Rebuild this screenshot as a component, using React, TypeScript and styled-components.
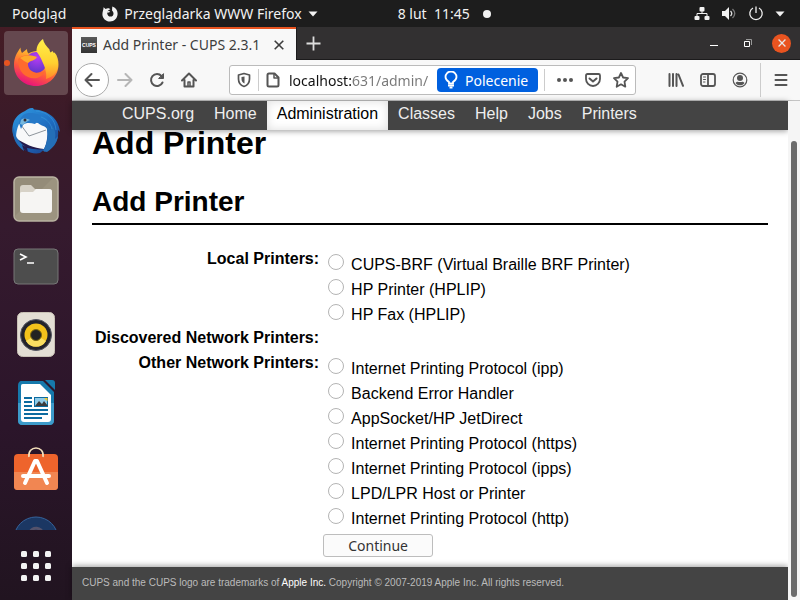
import React from "react";
import styled, { createGlobalStyle } from "styled-components";

const uiFont = `"Noto Sans", "Open Sans", sans-serif`;
const pageFont = `"Liberation Sans", Arial, sans-serif`;

const GlobalStyle = createGlobalStyle`
  *, *::before, *::after { box-sizing: border-box; }
  body { margin: 0; background: #fff; }
  button, input { font: inherit; color: inherit; }
  button { background: none; border: 0; padding: 0; cursor: pointer; }
  svg { display: block; flex: none; }
`;

/* ---------- desktop ---------- */

const Desktop = styled.div`
  display: flex;
  flex-direction: column;
  height: 100vh;
  overflow: hidden;
  font-family: ${uiFont};
`;

const TopBar = styled.header`
  display: grid;
  grid-template-columns: 1fr auto 1fr;
  align-items: center;
  flex: none;
  height: 27px;
  padding: 0 15px 0 12px;
  background: #1d1d1d;
  color: #f2f2f2;
  font-size: 14px;
  white-space: nowrap;
`;

const TopGroup = styled.div<{ $end?: boolean }>`
  display: flex;
  align-items: center;
  gap: ${(p) => (p.$end ? "11px" : "36px")};
  justify-content: ${(p) => (p.$end ? "flex-end" : "flex-start")};
`;

const TopButton = styled.button<{ $gap?: number }>`
  display: flex;
  align-items: center;
  gap: ${(p) => p.$gap ?? 6}px;
`;

const Clock = styled(TopButton)`
  margin-left: 80px;
`;

const Workspace = styled.div`
  display: flex;
  flex: 1;
  min-height: 0;
`;

const Dock = styled.nav`
  display: flex;
  flex-direction: column;
  flex: none;
  width: 72px;
  background: linear-gradient(#451c25 0, #391a29 110px, #351a2e 200px, #2b152a 400px, #211420 100%);
`;

const DockList = styled.div`
  display: flex;
  flex-direction: column;
  align-items: center;
  gap: 4px;
  flex: 1;
  min-height: 0;
  padding-top: 4px;
  overflow: hidden;
`;

const DockItem = styled.button<{ $active?: boolean }>`
  display: grid;
  place-items: center;
  flex: none;
  width: 64px;
  height: 64px;
  border-radius: 4px;
  background: ${(p) => (p.$active ? "#65484f" : "transparent")};
  position: relative;
  ${(p) =>
    p.$active &&
    `&::before {
      content: "";
      position: absolute;
      left: 0;
      top: 29px;
      width: 6px;
      height: 6px;
      border-radius: 50%;
      background: #e95420;
    }`}
`;

const AppsButton = styled.button`
  display: grid;
  place-items: center;
  height: 70px;
  padding-top: 2px;
  flex: none;
`;

/* ---------- browser ---------- */

const Browser = styled.section`
  display: flex;
  flex-direction: column;
  flex: 1;
  min-width: 0;
`;

const TabStrip = styled.div`
  display: flex;
  align-items: stretch;
  flex: none;
  height: 33px;
  background: #323031;
  border-bottom: 1px solid #1c1b1c;
  color: #e8e8e8;
`;

const Tab = styled.div`
  display: flex;
  align-items: center;
  width: 224px;
  height: 33px;
  padding: 0 12px 0 9px;
  gap: 6px;
  border-top: 2px solid #e95420;
  background: #f8f8f8;
  color: #3d3d3d;
  font-size: 14px;
  white-space: nowrap;
`;

const TabTitle = styled.span`
  flex: 1;
`;

const Favicon = styled.span`
  display: grid;
  place-items: center;
  width: 16px;
  height: 16px;
  background: linear-gradient(#5a5a5a, #333);
  color: #fff;
  font: bold 5px/16px ${pageFont};
`;

const NewTab = styled.button`
  padding: 0 9px;
  border-left: 1px solid #1c1b1c;
`;

const WindowControls = styled.div`
  display: flex;
  align-items: center;
  gap: 14px;
  margin-left: auto;
  padding-right: 9px;
`;

const WindowButton = styled.button<{ $close?: boolean }>`
  display: grid;
  place-items: center;
  width: ${(p) => (p.$close ? 19 : 20)}px;
  height: 19px;
  border-radius: 50%;
  background: ${(p) => (p.$close ? "#e95420" : "transparent")};
`;

const Toolbar = styled.div`
  display: flex;
  align-items: center;
  flex: none;
  height: 41px;
  padding: 0 5px 0 3px;
  background: #f8f8f8;
  border-bottom: 1px solid #c4c4c4;
  color: #555;
`;

const ToolButton = styled.button<{ $back?: boolean; $dim?: boolean }>`
  display: grid;
  place-items: center;
  flex: none;
  width: ${(p) => (p.$back ? 34 : 32)}px;
  height: ${(p) => (p.$back ? 34 : 32)}px;
  border-radius: 50%;
  border: ${(p) => (p.$back ? "1px solid #aaa" : "0")};
  background: ${(p) => (p.$back ? "#fff" : "transparent")};
  opacity: ${(p) => (p.$dim ? 0.4 : 1)};
`;

const UrlBar = styled.div`
  display: flex;
  align-items: center;
  flex: 1;
  min-width: 0;
  height: 30px;
  margin: 0 24px;
  padding-left: 6px;
  border: 1px solid #bbb;
  border-radius: 3px;
  background: #fff;
`;

const BarButton = styled.button<{ $width?: number }>`
  display: grid;
  align-items: center;
  justify-content: ${(p) => (p.$width ? "start" : "center")};
  flex: none;
  width: ${(p) => p.$width ?? 28}px;
  height: 28px;
`;

const Divider = styled.span<{ $tall?: boolean }>`
  flex: none;
  width: 1px;
  height: ${(p) => (p.$tall ? 34 : 22)}px;
  margin: 0 6px 0 ${(p) => (p.$tall ? 4 : 6)}px;
  background: #ccc;
`;

const UrlInput = styled.input`
  flex: 1;
  min-width: 0;
  height: 26px;
  padding: 0;
  border: 0;
  outline: 0;
  background: linear-gradient(90deg, #111 64px, #777 64px);
  background-clip: text;
  -webkit-background-clip: text;
  -webkit-text-fill-color: transparent;
  font-size: 14px;
`;

const Hint = styled.button`
  display: flex;
  align-items: center;
  gap: 7px;
  flex: none;
  width: 101px;
  height: 24px;
  padding-left: 7px;
  border-radius: 4px;
  background: #0060df;
  color: #fff;
  font-size: 14px;
`;

const Viewport = styled.div`
  display: flex;
  flex: 1;
  min-height: 0;
`;

const ScrollTrack = styled.div`
  flex: none;
  width: 12px;
  padding: 40px 3px 3px;
  background: #f5f5f5;
`;

const ScrollThumb = styled.div`
  height: 100%;
  border-radius: 3px;
  background: #6b6b6b;
`;

/* ---------- CUPS page ---------- */

const Page = styled.div`
  display: flex;
  flex-direction: column;
  flex: 1;
  min-width: 0;
  background: #fff;
  color: #000;
  font-family: ${pageFont};
  font-size: 16px;
`;

const SiteNav = styled.nav`
  display: flex;
  flex: none;
  height: 29px;
  padding-left: 40px;
  background: #444;
  box-shadow: 0 1px 6px rgba(0, 0, 0, 0.4);
`;

const NavLink = styled.a<{ $current?: boolean }>`
  padding: 0 10px;
  line-height: 25px;
  text-decoration: none;
  color: ${(p) => (p.$current ? "#000" : "#eee")};
  background: ${(p) => (p.$current ? "#fff" : "transparent")};
  box-shadow: ${(p) => (p.$current ? "inset 0 0 10px #ddd" : "none")};
`;

const Main = styled.main`
  flex: 1;
  min-height: 0;
  padding: 0 20px;
`;

const Title = styled.h1`
  margin: 0;
  font-size: 32px;
  line-height: 26px;
`;

const Subtitle = styled.h2`
  margin: 27px 0 0;
  padding-bottom: 2px;
  border-bottom: 2px solid #000;
  font-size: 28px;
  line-height: 38px;
`;

const PrinterForm = styled.form`
  display: grid;
  grid-template-columns: max-content 1fr;
  column-gap: 9px;
  padding: 21px 3px 0;
  line-height: 25px;
`;

const GroupLabel = styled.div`
  text-align: right;
  font-weight: bold;
`;

const Options = styled.div`
  display: flex;
  flex-direction: column;
  min-height: 25px;
`;

const Option = styled.label`
  display: flex;
  align-items: flex-start;
  gap: 7px;
  height: 25px;

  &:first-child { margin-top: 6px; }
  &:last-child { margin-bottom: -2px; }
`;

const Radio = styled.input`
  appearance: none;
  flex: none;
  width: 16px;
  height: 16px;
  margin: 2px 0 0;
  border: 1px solid #b4b4b4;
  border-radius: 50%;
  background: #fff;

  &:checked { border: 5px solid #e95420; }
`;

const Submit = styled.button`
  grid-column: 2;
  width: 110px;
  height: 23px;
  margin: 5px 0 0 -5px;
  border: 1px solid #bdbdbd;
  border-radius: 3px;
  background: #fbfbfb;
  color: #333;
  font: 14px/20px ${uiFont};
`;

const Footer = styled.footer`
  flex: none;
  height: 33px;
  padding: 0 10px;
  background: #444;
  box-shadow: 0 -1px 6px rgba(0, 0, 0, 0.4);
  color: #bbb;
  font-size: 10px;
  line-height: 31px;
  white-space: nowrap;

  a { color: #fff; text-decoration: none; }
`;

/* ---------- icons ---------- */

const FirefoxGlyph = () => (
  <svg width="16" height="16" viewBox="0 0 16 16" fill="#f2f2f2">
    <path d="M1.6 1.2 3.6 3C5.6 1.6 7.6 2.2 8.4 3.4 6.6 3.6 5 5 5.2 7.2c.1 2 1.6 3.4 3.2 3.4 2 0 3.3-1.500 3.1-3.400-.1-1.300-.8-2.200-1.500-2.800L10.300.6c3 .9 5.300 3.400 5.300 7.200 0 4.500-3.400 7.700-7.600 7.700S.4 12.300.4 8.200C.4 5.400 1.500 4.200 1.600 1.200Z" />
    <path d="M5 5.500c1-.8 2.400-.6 3.200.1-.4 1-1.800 1-2.700 1.300Z" />
  </svg>
);

const Caret = () => (
  <svg width="10" height="6" viewBox="0 0 10 6"><path d="M.5.5h9L5 5.500Z" fill="#f2f2f2" /></svg>
);

const NetworkIcon = () => (
  <svg width="16" height="16" viewBox="0 0 16 16" fill="#f2f2f2">
    <rect x="5.500" y="1" width="5" height="4.500" rx="1" />
    <rect x=".5" y="10" width="5" height="4" rx="1" />
    <rect x="10.500" y="10" width="5" height="4" rx="1" />
    <path d="M8 5v2.500M3 10.500v-3h10v3" fill="none" stroke="#f2f2f2" />
  </svg>
);

const VolumeIcon = () => (
  <svg width="16" height="16" viewBox="0 0 16 16" fill="none">
    <path d="M1 5h3l4-4v13l-4-4H1Z" fill="#f2f2f2" />
    <path d="M9.500 5c1.500 1.500 1.500 3.500 0 5" stroke="#ddd" strokeWidth="1.300" />
    <path d="M11.500 3c3 3 3 6 0 9" stroke="#777" strokeWidth="1.300" />
  </svg>
);

const PowerIcon = () => (
  <svg width="16" height="16" viewBox="0 0 16 16" fill="none" stroke="#f2f2f2" strokeWidth="1.300">
    <path d="M5 2a6.200 6.200 0 1 0 6 0M8 .5V7" />
  </svg>
);

const FirefoxIcon = () => (
  <svg width="48" height="48" viewBox="0 0 48 48">
    <defs>
      <linearGradient id="ffRing" x1=".85" y1=".1" x2=".4" y2="1">
        <stop offset="0" stopColor="#ffe03d" /><stop offset=".35" stopColor="#ffa02e" />
        <stop offset=".65" stopColor="#ff5a3c" /><stop offset="1" stopColor="#e8157a" />
      </linearGradient>
      <radialGradient id="ffGlobe" cx=".55" cy=".25" r=".8">
        <stop offset="0" stopColor="#b93cf5" /><stop offset="1" stopColor="#5a35c8" />
      </radialGradient>
      <linearGradient id="ffFlame" x1="0" y1="0" x2="0" y2="1">
        <stop offset="0" stopColor="#fff04a" /><stop offset=".6" stopColor="#ffd030" /><stop offset="1" stopColor="#ff8a2a" />
      </linearGradient>
    </defs>
    <path d="M8.500 8.500c0 2 .5 4 1.500 5.500l5-4c0 2 .5 3.500 1.500 4.500 7-4 16-4 20 2l6-3c3 3 4 8 4 12 0 12-10 21.500-22.500 21.500S2 38 2 26c0-8 3-12 6.500-17.500Z" fill="url(#ffRing)" />
    <circle cx="24" cy="23.500" r="10.500" fill="url(#ffGlobe)" />
    <path d="M24.500 12.500c0-6 3-10 6.500-12.500.5 4 3.500 7 6.500 10.500.2 1.500.5 2 1 3l2-1.500c3.500 5 6 10 5.500 16-1 5-5 10-12 12 1-6-1-12-3.500-17-1.500-4-3.500-7-6-10.500Z" fill="url(#ffFlame)" />
    <path d="M6 20c6-5 12-4 17-2 .5 3-4 3-7 6-1 8 9 13 17 8-3 7-11 9-17 6C8 35 6 26 6 20Z" fill="#ff6a2e" />
    <path d="M8 19c5-3 10-3 17-1-2 4-6 3-9 6-3-1-5-3-8-5Z" fill="#ffa92b" />
  </svg>
);

const ThunderbirdIcon = () => (
  <svg width="50" height="50" viewBox="0 0 50 50">
    <defs>
      <linearGradient id="tb" x1=".2" y1="0" x2="1" y2="1">
        <stop offset="0" stopColor="#2d93dc" /><stop offset=".5" stopColor="#1e6bbf" /><stop offset="1" stopColor="#1b3a80" />
      </linearGradient>
    </defs>
    <path d="M14 5c2-2 5-3.500 8-3l1 1.500C37 4 48 13 49 26l-2-2c1 8-2 14-7 18l1-4-5 7-3 1 1-3-5 4c-9 2-20-4-24-13C0 28 1 20 3 15 6 9 10 7 14 5Z" fill="url(#tb)" />
    <path d="M4 32c2 5 6 10 13 14l-1-4c6 1 12 2 17 1l-2-7Z" fill="#231a4c" />
    <path d="M8 18c5-2 12-2 19-1 3 3 8 3 9 6 1 6 0 14-3 20-10-1-20-5-28-11C5 27 6 22 8 18Z" fill="#f8f9fa" />
    <path d="m10 19 8 11 17-6" fill="none" stroke="#8e969d" />
    <path d="M8 17c1-6 5-10 10-10 8 0 14 2 19 7-6-1-10 0-13 4-4-1-9-2-12 1l-2 4Z" fill="#2579c8" />
    <path d="M10 14c3-3 7-1 9 0-3 1-5 3-7 5l-3-1Z" fill="#77b8dd" />
    <circle cx="14" cy="14" r="1.500" fill="#302d35" />
    <path d="M35 19c3 9 2 17-3 26l4 1c6-4 10-9 11-16l-3 3c1-5 0-10-3-14l-1 5c-1-2-3-4-5-5Z" fill="#246fb7" />
    <path d="M25 5c12 1 19 8 20 19M30 11c6 2 10 7 11 12" fill="none" stroke="#3998d9" opacity=".6" />
    <path d="M2 21c-1 11 3 18 11 24l-2-6 4 2c-5-3-9-8-11-13Z" fill="#216db8" />
  </svg>
);

const FilesIcon = () => (
  <svg width="46" height="46" viewBox="0 0 46 46">
    <rect x="1" y="1" width="44" height="44" rx="5" fill="#9c9480" stroke="#b9b2a1" strokeWidth="1.500" />
    <path d="M2 40V6c0-3 1-4 4-4h34Z" fill="#8c8472" opacity=".5" />
    <path d="M7 12c0-2 1-3 3-3h8l4 4h14c2 0 3 1 3 2v4H7Z" fill="#d7d2c7" />
    <path d="M7 18c0-2 1-2 3-2h10l3-3h13c2 0 3 1 3 3v18c0 2-1 3-3 3H10c-2 0-3-1-3-3Z" fill="#f6f5f3" />
  </svg>
);

const TerminalIcon = () => (
  <svg width="46" height="38" viewBox="0 0 46 38">
    <rect x="1" y="1" width="44" height="35" rx="4" fill="#4d4d4d" stroke="#777" />
    <path d="m7 6 6 3-6 3M14 15h7" fill="none" stroke="#fff" strokeWidth="1.600" />
  </svg>
);

const MusicIcon = () => (
  <svg width="38" height="46" viewBox="0 0 38 46">
    <rect x=".5" y=".5" width="37" height="44" rx="5" fill="#e3ded4" stroke="#c8c1b5" />
    <circle cx="19" cy="23" r="15.500" fill="#23232b" stroke="#555763" />
    <circle cx="19" cy="23" r="11.500" fill="#f3c21b" />
    <path d="M9 29a11.500 11.500 0 0 0 20 0l-10-6Z" fill="#f9df62" />
    <circle cx="19" cy="23" r="5.500" fill="#222" stroke="#7c670d" />
  </svg>
);

const WriterIcon = () => (
  <svg width="38" height="46" viewBox="0 0 38 46">
    <path d="M5 1h21l11 11v28c0 4-2 5-5 5H6c-4 0-5-2-5-5V6c0-3 1-5 4-5Z" fill="#1679ac" />
    <path d="M1 23h36v17c0 4-2 5-5 5H6c-4 0-5-2-5-5Z" fill="#3d9bca" />
    <path d="M6 4h17l11 11v24c0 2-1 3-3 3H7c-2 0-3-1-3-3V7c0-2 0-3 2-3Z" fill="#fff" />
    <path d="M28 0h7c2 0 3 1 3 3v7Z" fill="#1679ac" />
    <path d="M7 18h8M7 22h8M7 26h8M7 30h24M7 34h24M7 38h18" stroke="#0c6ba0" strokeWidth="2" />
    <rect x="17.500" y="17.500" width="13" height="9" fill="#8fcbe8" stroke="#0c6ba0" />
    <path d="m18 26 4-5 3 3 2-3 4 5Z" fill="#3c3c3c" /><path d="M27 18h3.500v3.500Z" fill="#f5c92e" />
  </svg>
);

const SoftwareIcon = () => (
  <svg width="46" height="50" viewBox="0 0 46 50">
    <rect x="1" y="8" width="44" height="36" rx="4" fill="#ee642c" />
    <path d="M1 26h44v14c0 3-1 4-4 4H5c-3 0-4-1-4-4Z" fill="#f18652" />
    <path d="M16 11c-2-12 16-12 14 0" fill="none" stroke="#f3dfba" strokeWidth="1.600" />
    <path d="m12 37 10-22h2l10 22M10 30h26" fill="none" stroke="#fff" strokeWidth="4" strokeLinejoin="round" strokeLinecap="round" />
  </svg>
);

const HelpIcon = () => (
  <svg width="46" height="46" viewBox="0 0 46 46">
    <circle cx="23" cy="23" r="22" fill="#1b3763" stroke="#35639c" />
    <path d="M17 17c1-7 13-6 12 1-1 4-6 5-6 10" fill="none" stroke="#54526b" strokeWidth="3" />
  </svg>
);

const AppsIcon = () => (
  <svg width="30" height="30" viewBox="0 0 30 30" fill="#f3f3f3">
    {[0, 12, 24].map((y) => [0, 12, 24].map((x) => <rect key={`${x}-${y}`} x={x} y={y} width="6" height="6" rx="1.500" />))}
  </svg>
);

const Plus = () => (
  <svg width="15" height="15" viewBox="0 0 15 15"><path d="M7.500.5v14M.5 7.500h14" stroke="#ddd" strokeWidth="1.800" /></svg>
);
const Cross = ({ size = 10 }: { size?: number }) => (
  <svg width={size} height={size} viewBox="0 0 10 10"><path d="m.7.7 8.600 8.600m0-8.600L.7 9.300" stroke="currentColor" strokeWidth="1.600" /></svg>
);
const Minimize = () => (
  <svg width="8" height="8" viewBox="0 0 8 8"><path d="M0 6.500h8" stroke="#fff" /></svg>
);
const Restore = () => (
  <svg width="8" height="8" viewBox="0 0 8 8" fill="none"><path d="M2 .5h5.500V6" stroke="#999" /><path d="M.5 2.500h5v5h-5Z" stroke="#fff" /></svg>
);

const Stroke = ({ children, width = 2 }: { children: React.ReactNode; width?: number }) => (
  <svg width="16" height="16" viewBox="0 0 16 16" fill="none" stroke="#555" strokeWidth={width} strokeLinecap="round" strokeLinejoin="round">
    {children}
  </svg>
);

const BackIcon = () => <Stroke><path d="M15 8H1.500M7.500 2l-6 6 6 6" /></Stroke>;
const ForwardIcon = () => <Stroke><path d="M1 8h13.500M8.500 2l6 6-6 6" /></Stroke>;
const ReloadIcon = () => <Stroke><path d="M13.500 10.500A6 6 0 1 1 12.500 4" /><path d="M14.500 2v4.500H10Z" fill="#555" strokeWidth="1" /></Stroke>;
const HomeIcon = () => <Stroke><path d="M1 8.500 8 1.500l7 7M3.500 8v6.500h9V8" /><path d="M7 14v-4h2v4" strokeWidth="1.500" /></Stroke>;
const ShieldIcon = () => (
  <svg width="16" height="16" viewBox="0 0 16 16" fill="none" stroke="#555" strokeWidth="1.700" strokeLinejoin="round">
    <path d="M8 1.500 13.500 3v4c0 4-2.500 6.500-5.500 7.500C5 13.500 2.500 11 2.500 7V3Z" /><path d="M8.500 4.500 5.500 5v2c0 2 1 3.500 3 4.500Z" fill="#555" stroke="none" />
  </svg>
);
const DocumentIcon = () => <Stroke><path d="M2.500 3c0-1 .5-1.500 1.500-1.500h5.500l4 4V13c0 1-.5 1.500-1.500 1.500H4c-1 0-1.500-.5-1.500-1.500Z" /><path d="M9 2v4h4" strokeWidth="1.500" /></Stroke>;
const BulbIcon = () => (
  <svg width="14" height="18" viewBox="0 0 14 18" fill="none" stroke="#fff" strokeWidth="1.800">
    <path d="M5 12.500V11C2 9 1.500 7 1.500 6a5.500 5.500 0 0 1 11 0c0 1-.5 3-3.500 5v1.500Z" /><path d="M4 14.500h6M5.500 16.700h3" />
  </svg>
);
const DotsIcon = () => (
  <svg width="16" height="16" viewBox="0 0 16 16" fill="#555"><circle cx="2" cy="8" r="2" /><circle cx="8" cy="8" r="2" /><circle cx="14" cy="8" r="2" /></svg>
);
const PocketIcon = () => <Stroke width={1.8}><path d="M2.500 2h11c1 0 1.500.5 1.500 1.500V7a7 7 0 0 1-14 0V3.500C1 2.500 1.500 2 2.500 2Z" /><path d="M4.500 6.500 8 9.500l3.500-3" strokeWidth="2" /></Stroke>;
const StarIcon = () => <Stroke width={1.8}><path d="m8 1 2.100 4.500 4.900.7-3.500 3.500.8 5L8 12.300l-4.300 2.400.8-5L1 6.200l4.900-.7Z" /></Stroke>;
const LibraryIcon = () => <Stroke><path d="M1.500 2v12M5 2v12M8.500 2v12M10.500 2.500l4.500 11.300" /></Stroke>;
const SidebarIcon = () => <Stroke width={1.8}><rect x="1" y="2" width="14" height="12" rx="2" /><path d="M8 2v12" /><path d="M3.500 5h2M3.500 7.500h2M3.500 10h1.500" strokeWidth="1" /></Stroke>;
const AccountIcon = () => (
  <svg width="16" height="16" viewBox="0 0 16 16" fill="#555">
    <circle cx="8" cy="8" r="6.800" fill="none" stroke="#555" strokeWidth="1.200" />
    <circle cx="8" cy="6" r="3" /><path d="M3.500 11c1.500-2 2.500-1 4.500-1s3-1 4.500 1c-1 1.500-2.500 2.300-4.500 2.300S4.500 12.500 3.500 11Z" />
  </svg>
);
const MenuIcon = () => <Stroke><path d="M2.500 3h11M2.500 8h11M2.500 13h11" /></Stroke>;

/* ---------- data ---------- */

const dockApps = [
  { name: "Firefox", Icon: FirefoxIcon, active: true },
  { name: "Thunderbird", Icon: ThunderbirdIcon },
  { name: "Files", Icon: FilesIcon },
  { name: "Terminal", Icon: TerminalIcon },
  { name: "Rhythmbox", Icon: MusicIcon },
  { name: "LibreOffice Writer", Icon: WriterIcon },
  { name: "Ubuntu Software", Icon: SoftwareIcon },
  { name: "Help", Icon: HelpIcon },
];

const navLinks = ["CUPS.org", "Home", "Administration", "Classes", "Help", "Jobs", "Printers"];

const printerGroups = [
  { label: "Local Printers:", options: ["CUPS-BRF (Virtual Braille BRF Printer)", "HP Printer (HPLIP)", "HP Fax (HPLIP)"] },
  { label: "Discovered Network Printers:", options: [] },
  {
    label: "Other Network Printers:",
    options: [
      "Internet Printing Protocol (ipp)",
      "Backend Error Handler",
      "AppSocket/HP JetDirect",
      "Internet Printing Protocol (https)",
      "Internet Printing Protocol (ipps)",
      "LPD/LPR Host or Printer",
      "Internet Printing Protocol (http)",
    ],
  },
];

export default function App() {
  return (
    <Desktop>
      <GlobalStyle />
      <TopBar>
        <TopGroup>
          <TopButton>Podgląd</TopButton>
          <TopButton><FirefoxGlyph />Przeglądarka WWW Firefox<Caret /></TopButton>
        </TopGroup>
        <Clock $gap={13}>
          <span>8 lut&nbsp; 11:45</span>
          <svg width="8" height="8" viewBox="0 0 8 8"><circle cx="4" cy="4" r="4" fill="#f2f2f2" /></svg>
        </Clock>
        <TopGroup $end>
          <NetworkIcon /><VolumeIcon /><PowerIcon /><Caret />
        </TopGroup>
      </TopBar>
      <Workspace>
        <Dock aria-label="Dock">
          <DockList>
            {dockApps.map(({ name, Icon, active }) => (
              <DockItem key={name} $active={active} aria-label={name}><Icon /></DockItem>
            ))}
          </DockList>
          <AppsButton aria-label="Applications"><AppsIcon /></AppsButton>
        </Dock>
        <Browser>
          <TabStrip>
            <Tab>
              <Favicon>CUPS</Favicon>
              <TabTitle>Add Printer - CUPS 2.3.1</TabTitle>
              <button aria-label="Close tab"><Cross /></button>
            </Tab>
            <NewTab aria-label="New tab"><Plus /></NewTab>
            <WindowControls>
              <WindowButton aria-label="Minimize"><Minimize /></WindowButton>
              <WindowButton aria-label="Restore"><Restore /></WindowButton>
              <WindowButton $close aria-label="Close"><Cross size={8} /></WindowButton>
            </WindowControls>
          </TabStrip>
          <Toolbar>
            <ToolButton $back aria-label="Back"><BackIcon /></ToolButton>
            <ToolButton $dim aria-label="Forward"><ForwardIcon /></ToolButton>
            <ToolButton aria-label="Reload"><ReloadIcon /></ToolButton>
            <ToolButton aria-label="Home"><HomeIcon /></ToolButton>
            <UrlBar>
              <BarButton $width={16} aria-label="Protection"><ShieldIcon /></BarButton>
              <Divider />
              <BarButton $width={24} aria-label="Site information"><DocumentIcon /></BarButton>
              <UrlInput aria-label="Address" defaultValue="localhost:631/admin/" />
              <Hint><BulbIcon />Polecenie</Hint>
              <Divider />
              <BarButton aria-label="Page actions"><DotsIcon /></BarButton>
              <BarButton aria-label="Save to Pocket"><PocketIcon /></BarButton>
              <BarButton aria-label="Bookmark"><StarIcon /></BarButton>
            </UrlBar>
            <ToolButton aria-label="Library"><LibraryIcon /></ToolButton>
            <ToolButton aria-label="Sidebar"><SidebarIcon /></ToolButton>
            <ToolButton aria-label="Account"><AccountIcon /></ToolButton>
            <Divider $tall />
            <BarButton aria-label="Menu"><MenuIcon /></BarButton>
          </Toolbar>
          <Viewport>
            <Page>
              <SiteNav>
                {navLinks.map((text) => (
                  <NavLink key={text} href="#" $current={text === "Administration"}>{text}</NavLink>
                ))}
              </SiteNav>
              <Main>
                <Title>Add Printer</Title>
                <Subtitle>Add Printer</Subtitle>
                <PrinterForm onSubmit={(e) => e.preventDefault()}>
                  {printerGroups.map((group, i) => (
                    <React.Fragment key={group.label}>
                      <GroupLabel id={`group-${i}`}>{group.label}</GroupLabel>
                      <Options role="radiogroup" aria-labelledby={`group-${i}`}>
                        {group.options.map((text) => (
                          <Option key={text}>
                            <Radio type="radio" name="device" value={text} />
                            <span>{text}</span>
                          </Option>
                        ))}
                      </Options>
                    </React.Fragment>
                  ))}
                  <Submit type="submit">Continue</Submit>
                </PrinterForm>
              </Main>
              <Footer>
                CUPS and the CUPS logo are trademarks of <a href="#">Apple Inc.</a> Copyright © 2007-2019 Apple Inc. All rights reserved.
              </Footer>
            </Page>
            <ScrollTrack><ScrollThumb /></ScrollTrack>
          </Viewport>
        </Browser>
      </Workspace>
    </Desktop>
  );
}
